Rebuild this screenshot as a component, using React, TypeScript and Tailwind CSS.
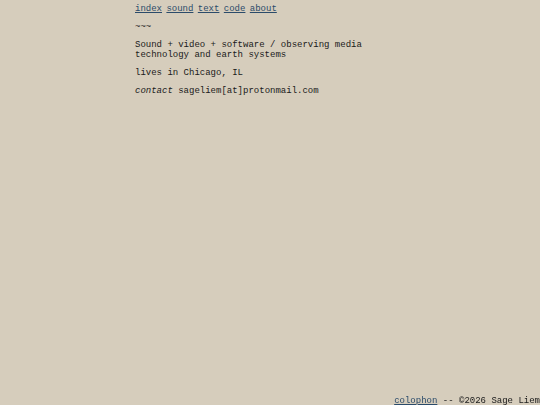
export default function App() {
  const nav = ["index", "sound", "text", "code", "about"];

  return (
    <div className="min-h-screen bg-[#d6cdbc] text-[#1a1a1a] font-['Liberation_Mono',monospace] text-[9px] leading-[10px]">
      <div className="ml-[25%] pt-[4px]">
        <nav className="flex gap-[4.4px]">
          {nav.map((n) => (
            <a key={n} href="#" className="text-[#2b4b6a] underline">
              {n}
            </a>
          ))}
        </nav>
        <p className="mt-2">~~~</p>
        <p className="mt-2">
          Sound + video + software / observing media
          <br />
          technology and earth systems
        </p>
        <p className="mt-2">lives in Chicago, IL</p>
        <p className="mt-2">
          <em>contact</em> sageliem[at]protonmail.com
        </p>
      </div>

      <footer className="fixed bottom-[-1px] right-0">
        <a href="#" className="text-[#2b4b6a] underline">
          colophon
        </a>{" "}
        -- ©2026 Sage Liem
      </footer>
    </div>
  );
}
